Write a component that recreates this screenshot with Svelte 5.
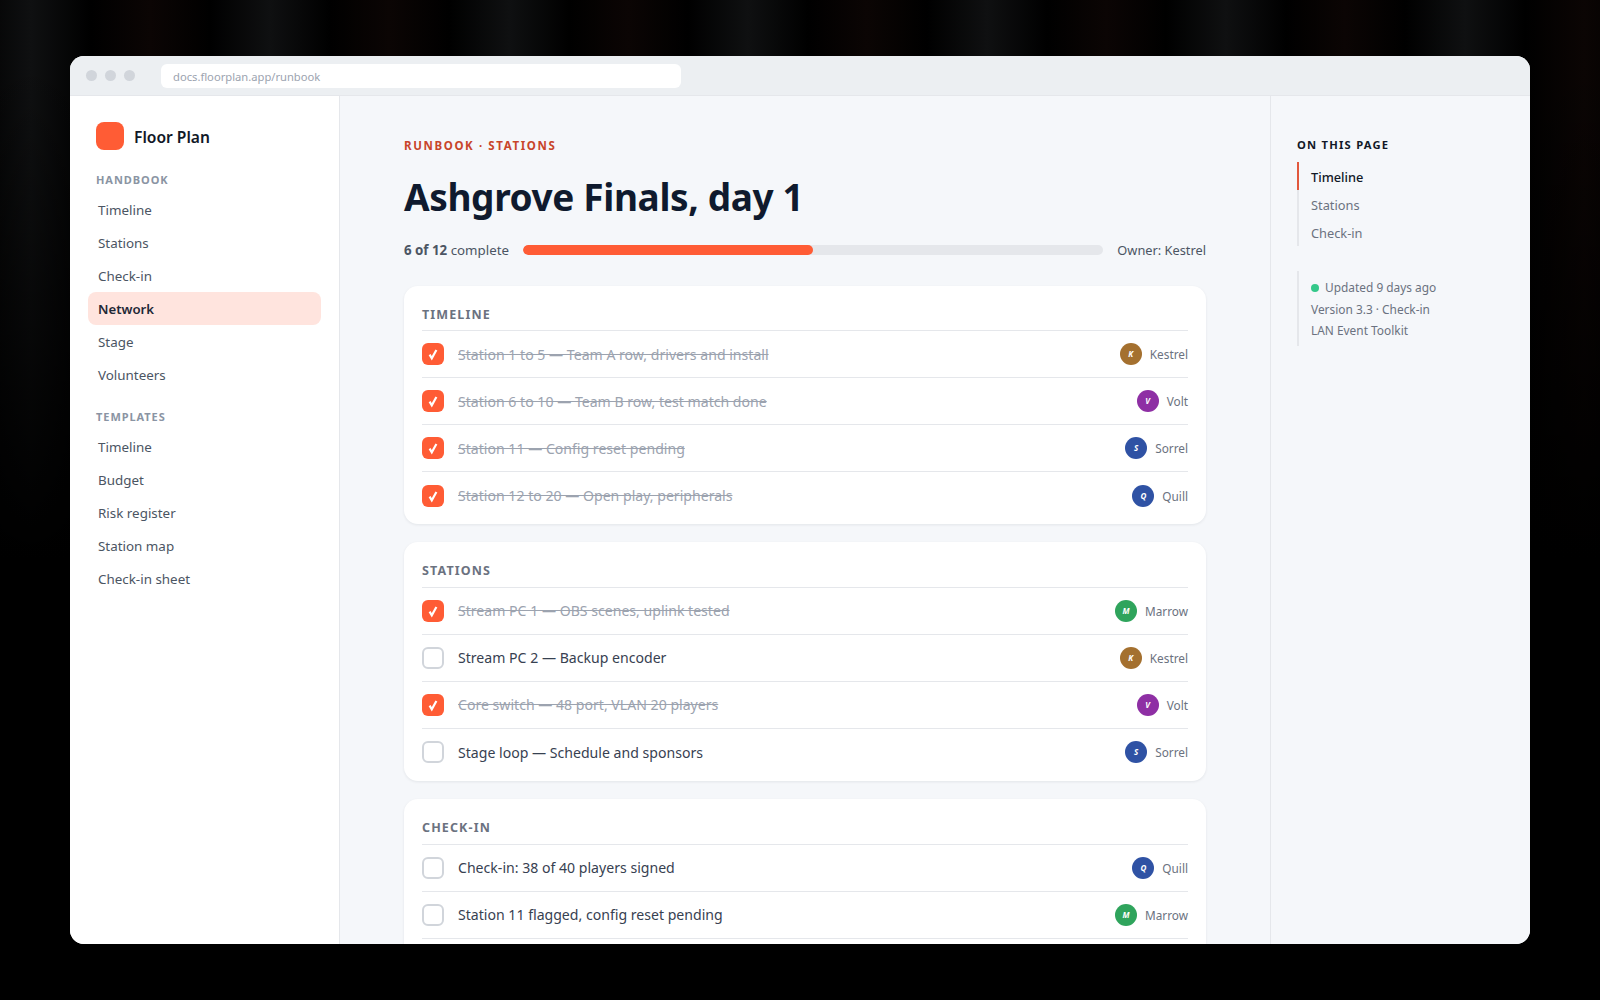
<script>
  const handbook = ['Timeline', 'Stations', 'Check-in', 'Network', 'Stage', 'Volunteers']
  const templates = ['Timeline', 'Budget', 'Risk register', 'Station map', 'Check-in sheet']
  const people = {
    Kestrel: '#a4702f',
    Volt: '#8e2fa4',
    Sorrel: '#2f52a4',
    Quill: '#2f52a4',
    Marrow: '#2fa45c'
  }
  const sections = [
    {
      title: 'Timeline',
      rows: [
        { text: 'Station 1 to 5 — Team A row, drivers and install', who: 'Kestrel', done: true },
        { text: 'Station 6 to 10 — Team B row, test match done', who: 'Volt', done: true },
        { text: 'Station 11 — Config reset pending', who: 'Sorrel', done: true },
        { text: 'Station 12 to 20 — Open play, peripherals', who: 'Quill', done: true }
      ]
    },
    {
      title: 'Stations',
      rows: [
        { text: 'Stream PC 1 — OBS scenes, uplink tested', who: 'Marrow', done: true },
        { text: 'Stream PC 2 — Backup encoder', who: 'Kestrel', done: false },
        { text: 'Core switch — 48 port, VLAN 20 players', who: 'Volt', done: true },
        { text: 'Stage loop — Schedule and sponsors', who: 'Sorrel', done: false }
      ]
    },
    {
      title: 'Check-in',
      rows: [
        { text: 'Check-in: 38 of 40 players signed', who: 'Quill', done: false },
        { text: 'Station 11 flagged, config reset pending', who: 'Marrow', done: false },
        { text: '', who: '', done: false }
      ]
    }
  ]
</script>

<div class="backdrop">
  <div class="window">
    <header class="chrome">
      <div class="dots"><i></i><i></i><i></i></div>
      <div class="url">docs.floorplan.app/runbook</div>
    </header>

    <div class="body">
      <aside class="side">
        <div class="brand">
          <span class="logo"></span>
          <strong>Floor Plan</strong>
        </div>
        <p class="group">Handbook</p>
        <nav>
          {#each handbook as item}
            <div class="nav-item" class:active={item === 'Network'}>{item}</div>
          {/each}
        </nav>
        <p class="group second">Templates</p>
        <nav>
          {#each templates as item}
            <div class="nav-item">{item}</div>
          {/each}
        </nav>
      </aside>

      <main class="main">
        <p class="eyebrow">Runbook · Stations</p>
        <h1>Ashgrove Finals, day 1</h1>
        <div class="progress">
          <span class="count"><b>6 of 12</b> complete</span>
          <div class="track"><div class="fill" style="width: 50%"></div></div>
          <span class="owner">Owner: Kestrel</span>
        </div>

        {#each sections as section}
          <section class="card">
            <h2>{section.title}</h2>
            {#each section.rows as row}
              <div class="row">
                <span class="box" class:checked={row.done}>
                  {#if row.done}
                    <svg viewBox="0 0 22 22" width="22" height="22"><path d="M7.6 11.6l2.2 3.7L14.4 7" fill="none" stroke="#fff" stroke-width="2.2" /></svg>
                  {/if}
                </span>
                <span class="task" class:done={row.done}>{row.text}</span>
                {#if row.who}
                  <span class="who">
                    <span class="avatar" style="background: {people[row.who]}">{row.who[0]}</span>
                    {row.who}
                  </span>
                {/if}
              </div>
            {/each}
          </section>
        {/each}
      </main>

      <aside class="toc">
        <p class="toc-title">On this page</p>
        <div class="toc-links">
          <div class="toc-link current">Timeline</div>
          <div class="toc-link">Stations</div>
          <div class="toc-link">Check-in</div>
        </div>
        <div class="meta">
          <div><span class="dot"></span>Updated 9 days ago</div>
          <div>Version 3.3 · Check-in</div>
          <div>LAN Event Toolkit</div>
        </div>
      </aside>
    </div>
  </div>
</div>

<style>
  :global(body) {
    margin: 0;
    background: #000;
  }

  .backdrop {
    box-sizing: border-box;
    width: 1600px;
    height: 1000px;
    padding: 56px 70px;
    overflow: hidden;
    background:
      linear-gradient(to bottom, rgba(0, 0, 0, 0) 60px, #000 560px),
      repeating-linear-gradient(to right, #0b0504 -89px, #000 -29px, #0f1011 31px, #000 91px, #0b0504 150px);
    font-family: "Noto Sans", sans-serif;
    color: #111827;
  }

  .window {
    display: flex;
    flex-direction: column;
    height: 888px;
    border-radius: 14px;
    overflow: hidden;
    background: #fff;
  }

  .chrome {
    flex: none;
    display: flex;
    align-items: center;
    gap: 26px;
    box-sizing: border-box;
    height: 40px;
    padding: 0 16px;
    background: #eceff2;
    border-bottom: 1px solid #e5e7eb;
  }

  .dots {
    display: flex;
    gap: 8px;
  }

  .dots i {
    width: 11px;
    height: 11px;
    border-radius: 50%;
    background: #d1d5db;
  }

  .url {
    box-sizing: border-box;
    width: 520px;
    height: 24px;
    padding-left: 12px;
    border-radius: 6px;
    background: #fff;
    font-size: 11.2px;
    line-height: 25px;
    color: #9ca3af;
  }

  .body {
    flex: 1;
    display: flex;
    min-height: 0;
  }

  .side {
    flex: none;
    box-sizing: border-box;
    width: 270px;
    padding: 26px 18px 0 26px;
    background: #fff;
    border-right: 1px solid #e5e7eb;
  }

  .brand {
    display: flex;
    align-items: center;
    gap: 10px;
    font-size: 15.6px;
    color: #111827;
  }

  .brand strong {
    padding-top: 2px;
    font-weight: 600;
  }

  .logo {
    width: 28px;
    height: 28px;
    border-radius: 8px;
    background: #ff5c35;
  }

  .group {
    margin: 22px 0 5px;
    font-size: 11px;
    line-height: 16px;
    font-weight: 700;
    letter-spacing: 0.085em;
    text-transform: uppercase;
    color: #8a94a3;
  }

  .group.second {
    margin-top: 18px;
  }

  .nav-item {
    height: 33px;
    margin-left: -8px;
    padding-left: 10px;
    border-radius: 8px;
    font-size: 13.4px;
    line-height: 35px;
    color: #4b5563;
  }

  .nav-item.active {
    background: #ffe4de;
    color: #1f2937;
    font-size: 13.2px;
    font-weight: 600;
  }

  .main {
    flex: 1;
    min-width: 0;
    padding: 42px 64px 0;
    background: #f5f7fa;
    overflow: hidden;
  }

  .eyebrow {
    margin: 0;
    font-size: 11.5px;
    line-height: 16px;
    font-weight: 700;
    letter-spacing: 0.14em;
    text-transform: uppercase;
    color: #c8452a;
  }

  h1 {
    margin: 17px 0 0;
    font-size: 37px;
    line-height: 52px;
    font-weight: 700;
    letter-spacing: -0.01em;
    color: #0f1a2e;
  }

  .progress {
    display: flex;
    align-items: center;
    gap: 14px;
    margin: 17px 0 25.6px;
    line-height: 20px;
    color: #4b5563;
  }

  .count {
    font-size: 13.3px;
  }

  .owner {
    font-size: 12.8px;
  }

  .progress b {
    font-weight: 700;
  }

  .track {
    flex: 1;
    height: 10px;
    border-radius: 5px;
    background: #e5e7eb;
    overflow: hidden;
  }

  .fill {
    height: 100%;
    border-radius: 5px;
    background: #ff5c35;
  }

  .card {
    margin-bottom: 18px;
    padding: 18px 18px 5.2px;
    border-radius: 14px;
    background: #fff;
    box-shadow: 0 1px 3px rgba(17, 24, 39, 0.08);
  }

  h2 {
    margin: 0;
    height: 26.6px;
    border-bottom: 1px solid #e5e7eb;
    font-size: 12.5px;
    line-height: 22px;
    font-weight: 700;
    letter-spacing: 0.09em;
    text-transform: uppercase;
    color: #6b7280;
  }

  .row {
    display: flex;
    align-items: center;
    gap: 14px;
    box-sizing: border-box;
    height: 47px;
    border-bottom: 1px solid #e5e7eb;
  }

  .row:last-child {
    border-bottom: none;
  }

  .box {
    flex: none;
    box-sizing: border-box;
    width: 22px;
    height: 22px;
    border: 2px solid #d1d5db;
    border-radius: 6px;
    background: #fff;
  }

  .box.checked {
    border: none;
    background: #ff5c35;
  }

  .box svg {
    display: block;
  }

  .task {
    flex: 1;
    font-size: 14.1px;
    color: #374151;
  }

  .task.done {
    color: #9ca3af;
    text-decoration: line-through;
  }

  .who {
    display: flex;
    align-items: center;
    gap: 8px;
    font-size: 11.8px;
    color: #6b7280;
  }

  .avatar {
    width: 22px;
    height: 22px;
    border-radius: 50%;
    font-size: 8px;
    font-weight: 700;
    font-style: italic;
    line-height: 22px;
    text-align: center;
    color: #fff;
  }

  .toc {
    flex: none;
    box-sizing: border-box;
    width: 260px;
    padding: 41px 26px 0;
    background: #f5f7fa;
    border-left: 1px solid #e5e7eb;
  }

  .toc-title {
    margin: 0 0 9px;
    font-size: 11.2px;
    line-height: 16px;
    font-weight: 700;
    letter-spacing: 0.11em;
    text-transform: uppercase;
    color: #111827;
  }

  .toc-links {
    border-left: 2px solid #e5e7eb;
  }

  .toc-link {
    height: 28px;
    margin-left: -2px;
    padding-left: 12px;
    border-left: 2px solid transparent;
    font-size: 12.8px;
    line-height: 30px;
    color: #6b7280;
  }

  .toc-link.current {
    border-left-color: #e2583d;
    color: #111827;
    font-weight: 500;
  }

  .meta {
    margin-top: 25px;
    padding: 6px 0 4px 12px;
    border-left: 2px solid #e5e7eb;
    font-size: 11.9px;
    line-height: 21.6px;
    color: #6b7280;
  }

  .dot {
    display: inline-block;
    width: 8px;
    height: 8px;
    margin-right: 6px;
    border-radius: 50%;
    background: #34c88a;
  }
</style>
